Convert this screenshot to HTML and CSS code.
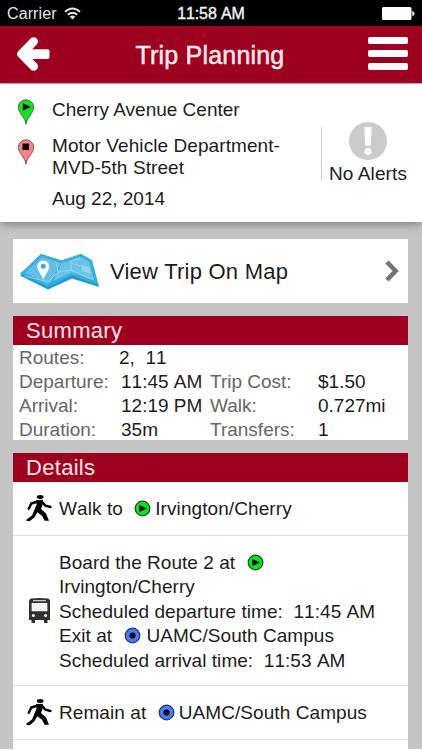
FILE: index.html
```html
<!DOCTYPE html>
<html lang="en">
<head>
<meta charset="utf-8">
<title>Trip Planning</title>
<link rel="stylesheet" href="styles.css">
</head>
<body>
<svg class="defs" aria-hidden="true">
  <symbol id="walk" viewBox="0 0 26 27">
    <ellipse cx="14.2" cy="2" rx="3.4" ry="1.900"/>
    <path d="M12 6.500 L5.300 8.500 L2.800 13.800M15.500 6.200 L19.300 10.600 L24.500 12" fill="none" stroke="#000" stroke-width="2.4" stroke-linecap="round" stroke-linejoin="round"/>
    <path d="M10 5.200 L16.600 4.800 L17.200 8 L15 14 L20 18.500 L23 25.800 L18.600 25.800 L16 20.800 L11.300 17.200 L8.500 22.300 L3.600 26.300 L.5 26 L.5 24.500 L6 20.500 L8.300 15 L10.800 9 Z"/>
  </symbol>
  <symbol id="play" viewBox="0 0 17 17">
    <circle cx="8.5" cy="8.5" r="7.3" fill="#12df22" stroke="#174c1b" stroke-width="1.2"/>
    <path d="M5.3 5 L13 8.5 L5.3 12 Z" fill="#031603"/>
  </symbol>
  <symbol id="stop" viewBox="0 0 17 17">
    <circle cx="8.5" cy="8.5" r="7.3" fill="#4c7af2" stroke="#23365f" stroke-width="1.2"/>
    <circle cx="8.5" cy="8.5" r="3.1" fill="#020611"/>
  </symbol>
</svg>
<div class="screen">
  <div class="status">
    <div class="signal">
      <span class="carrier">Carrier</span>
      <svg viewBox="0 0 17 13" width="17" height="13" fill="none" stroke="#e8e8e8" stroke-width="1.9"><path d="M1 4.9 Q8.5 -2 16 4.9M3.8 7.8 Q8.5 3.6 13.2 7.8"/><path d="M5.7 9.7 Q8.5 7.5 11.3 9.7 L8.5 12.6Z" fill="#e8e8e8" stroke="none"/></svg>
    </div>
    <span class="clock">11:58 AM</span>
    <svg class="battery" viewBox="0 0 33 13" width="33" height="13" fill="#fff"><rect width="29.5" height="13" rx="1.5"/><path d="M30.3 4 Q32.6 4.5 32.6 6.500 Q32.6 8.500 30.3 9Z"/></svg>
  </div>
  <header class="bar">
    <svg viewBox="0 0 34 36" width="34" height="36" fill="none" stroke="#fff"><path d="M17.7 5.500 L5.500 18 L17.7 30.500" stroke-width="8.6" stroke-linecap="round" stroke-linejoin="round"/><rect x="8" y="13.300" width="25.500" height="9.600" rx="2" fill="#fff" stroke="none"/></svg>
    <h1>Trip Planning</h1>
    <div class="menu"><i></i><i></i><i></i></div>
  </header>
  <section class="trip">
    <div class="places">
      <div class="place">
        <svg class="pin" viewBox="0 0 18 26" width="18" height="26"><path d="M9 25.2 C8.6 19 1.3 14 1.3 8.5 A7.7 7.7 0 0 1 16.7 8.5 C16.7 14 9.4 19 9 25.2Z" fill="#1edb29" stroke="#39703b"/><path d="M5.8 4.2 L14 8 L5.8 11.4Z" fill="#031603"/></svg>
        <p>Cherry Avenue Center</p>
      </div>
      <div class="place second">
        <svg class="pin" viewBox="0 0 18 26" width="18" height="26"><path d="M9 25.2 C8.6 19 1.3 14 1.3 8.5 A7.7 7.7 0 0 1 16.7 8.5 C16.7 14 9.4 19 9 25.2Z" fill="#f58385" stroke="#885052"/><path d="M5.5 4.5h6.5v6.5H5.5Z" fill="#100000"/></svg>
        <p>Motor Vehicle Department-<br>MVD-5th Street</p>
      </div>
      <p class="date">Aug 22, 2014</p>
    </div>
    <div class="alerts">
      <svg viewBox="0 0 38 38" width="38" height="38"><circle cx="19" cy="19" r="19" fill="#cbcbcb"/><path d="M15.3 5h7.4l-.8 18.500h-5.8Z" fill="#fff"/><circle cx="19" cy="29.5" r="3.4" fill="#fff"/></svg>
      <span>No Alerts</span>
    </div>
  </section>
  <main>
    <a class="map">
      <svg viewBox="0 0 79 37" width="79" height="37">
        <path d="M0 22.5 L21 1 L41.5 7.5 L61 1 L72 8 L79 34 L52 25.5 L28 36.5Z" fill="#2199cf"/>
        <path d="M0 20.8 L21 1 L41.5 7.5 L61 1 L72 7 L78 31.5 L52 22.5 L28 34Z" fill="#38aee0"/>
        <path d="M5 20 L22 4 L41 10 L31 29 L27 30.5Z" fill="#62bfe6"/>
        <path d="M42 10 L60 4 L69 8.5 L74 27.5 L52 19.5 L33 28Z" fill="#6bc3e7"/>
        <path d="M5 23 L28 29 L38 19 L51 17 L74 27M38 19 L36 9M51 17 L51 8 L60 5M51 10 L68 15" fill="none" stroke="#93d3ed" stroke-width="1"/>
        <path d="M61 12 l8 2 2 7 -9 -3Z" fill="#94d2ed"/>
        <path d="M23.3 27 C22.5 22 17.3 18 17.3 13.4 A6 6 0 0 1 29.3 13.4 C29.3 18 24.2 22 23.3 27Z" fill="#fff"/><circle cx="23.3" cy="13.2" r="2.5" fill="#3babdc"/>
      </svg>
      <span>View Trip On Map</span>
      <svg class="chevron" viewBox="0 0 14 22" width="14" height="22" fill="none" stroke="#747474" stroke-width="4.6"><path d="M2 2 L10.6 11 L2 20"/></svg>
    </a>
    <section class="card">
      <h2>Summary</h2>
      <dl class="summary">
        <dt>Routes:</dt><dd class="wide">2,&nbsp; 11</dd>
        <dt>Departure:</dt><dd>11:45 AM</dd><dt>Trip Cost:</dt><dd>$1.50</dd>
        <dt>Arrival:</dt><dd>12:19 PM</dd><dt>Walk:</dt><dd>0.727mi</dd>
        <dt>Duration:</dt><dd>35m</dd><dt>Transfers:</dt><dd>1</dd>
      </dl>
    </section>
    <section class="card details">
      <h2>Details</h2>
      <div class="step">
        <svg class="walker"><use href="#walk"/></svg>
        <p>Walk to <svg class="dot"><use href="#play"/></svg>Irvington/Cherry</p>
      </div>
      <div class="step ride">
        <svg class="bus" viewBox="0 0 21 25" width="21" height="25"><path d="M2 .5 Q10.500 -.5 19 .5 Q21 1 21 3V22H18.500V25H15V22H6V25H2.500V22H0V3Q0 1 2 .5Z" fill="#303030"/><path d="M4 2.300H17V3.300H4ZM2.600 5H18.400V13.300H2.600Z" fill="#f4f4f4"/><circle cx="4.400" cy="17.500" r="1.500" fill="#fff"/><circle cx="16.600" cy="17.500" r="1.500" fill="#fff"/></svg>
        <p>Board the Route 2 at <svg class="dot"><use href="#play"/></svg><br>Irvington/Cherry<br>Scheduled departure time:&nbsp; 11:45 AM<br>Exit at <svg class="dot"><use href="#stop"/></svg>UAMC/South Campus<br>Scheduled arrival time:&nbsp; 11:53 AM</p>
      </div>
      <div class="step">
        <svg class="walker"><use href="#walk"/></svg>
        <p>Remain at <svg class="dot"><use href="#stop"/></svg>UAMC/South Campus</p>
      </div>
      <div class="next"></div>
    </section>
  </main>
</div>
</body>
</html>
```
FILE: styles.css
```css
* { box-sizing: border-box; }
body { margin: 0; background: #fff; font: 19px/22px "Liberation Sans", Arial, sans-serif; color: #1c1c1c; overflow: hidden; }
h1, h2, p, dl, dd { margin: 0; font-weight: 400; }
svg { display: block; flex: none; }
.defs { position: absolute; width: 0; height: 0; }
.screen { width: 422px; height: 749px; background: #c5c5c5; overflow: hidden; }

.status { display: grid; grid-template-columns: 1fr auto 1fr; align-items: center; height: 26px; padding: 0 7px 0 7px; background: #000; color: #e6e6e6; font-size: 16px; line-height: 26px; }
.signal { display: flex; align-items: center; gap: 7px; }
.carrier { padding-top: 1px; letter-spacing: .1px; }
.clock { padding-top: 1px; color: #f2f2f2; white-space: nowrap; font-kerning: none; letter-spacing: -.1px; -webkit-text-stroke: .4px #f2f2f2; }
.battery { justify-self: end; }

.bar { display: flex; align-items: center; justify-content: space-between; height: 58px; padding: 0 14px 2px 16px; background: #9e0020; border-bottom: 1px solid #e69aa8; color: #fff; }
.bar h1 { margin: 2px 0 0 2px; font-size: 25px; line-height: 30px; letter-spacing: .2px; color: #fbe9ec; -webkit-text-stroke: .5px #fbe9ec; }
.menu { display: grid; gap: 6px; width: 40px; }
.menu i { height: 7px; border-radius: 2px; background: #fff; }

.trip { position: relative; display: flex; height: 138px; background: #fff; box-shadow: 0 3px 9px -1px #777; }
.places { flex: 1; padding: 15px 0 0 17px; }
.place { display: flex; gap: 17px; }
.place.second { margin-top: 14px; }
.place p { line-height: 21px; white-space: nowrap; }
.place.second p { line-height: 22px; letter-spacing: .08px; }
.pin { margin-bottom: -4px; }
.place.second .pin { margin-top: 4px; }
.date { margin: 9px 0 0 35px; }
.alerts { display: flex; flex-direction: column; align-items: center; width: 93px; height: 53px; margin: 43px 8px 0 0; border-left: 1px solid #ccc; white-space: nowrap; }
.alerts svg { margin-top: -5px; }
.alerts span { margin-top: 3px; letter-spacing: .1px; }

main { padding: 17px 14px 0 13px; }
.map { display: flex; align-items: center; height: 64px; padding: 0 9px 0 7px; background: #fff; font-size: 22px; }
.map span { flex: 1; margin: 1px 0 0 11px; letter-spacing: .23px; }
.card { margin-top: 13px; background: #fff; }
.card h2 { height: 29px; padding-left: 13px; background: #9e0020; color: #ffe4e8; font-size: 22px; line-height: 30px; letter-spacing: .3px; }
.summary { display: grid; grid-template-columns: 102px 89px 108px 1fr; grid-auto-rows: 24px; height: 95px; padding-left: 6px; line-height: 25px; white-space: nowrap; }
.summary dt { color: #666; }
.summary dd { font-kerning: none; }
.summary .wide { grid-column: span 3; margin-left: -2px; }
.step { display: flex; align-items: center; height: 54px; padding-left: 13px; border-bottom: 1px solid #ddd; white-space: nowrap; }
.step p { line-height: 24px; font-kerning: none; letter-spacing: .08px; }
.walker { width: 26px; height: 27px; margin-right: 7px; }
.bus { margin: 0 9px 0 3px; }
.ride { height: 150px; }
.step.ride p { padding-top: 3px; line-height: 24.5px; letter-spacing: .04px; }
.dot { display: inline-block; width: 17px; height: 17px; margin: 0 4px 0 6px; vertical-align: -2px; }
.ride .dot { margin: 0 5px 0 7px; }
.next { height: 20px; }
```
